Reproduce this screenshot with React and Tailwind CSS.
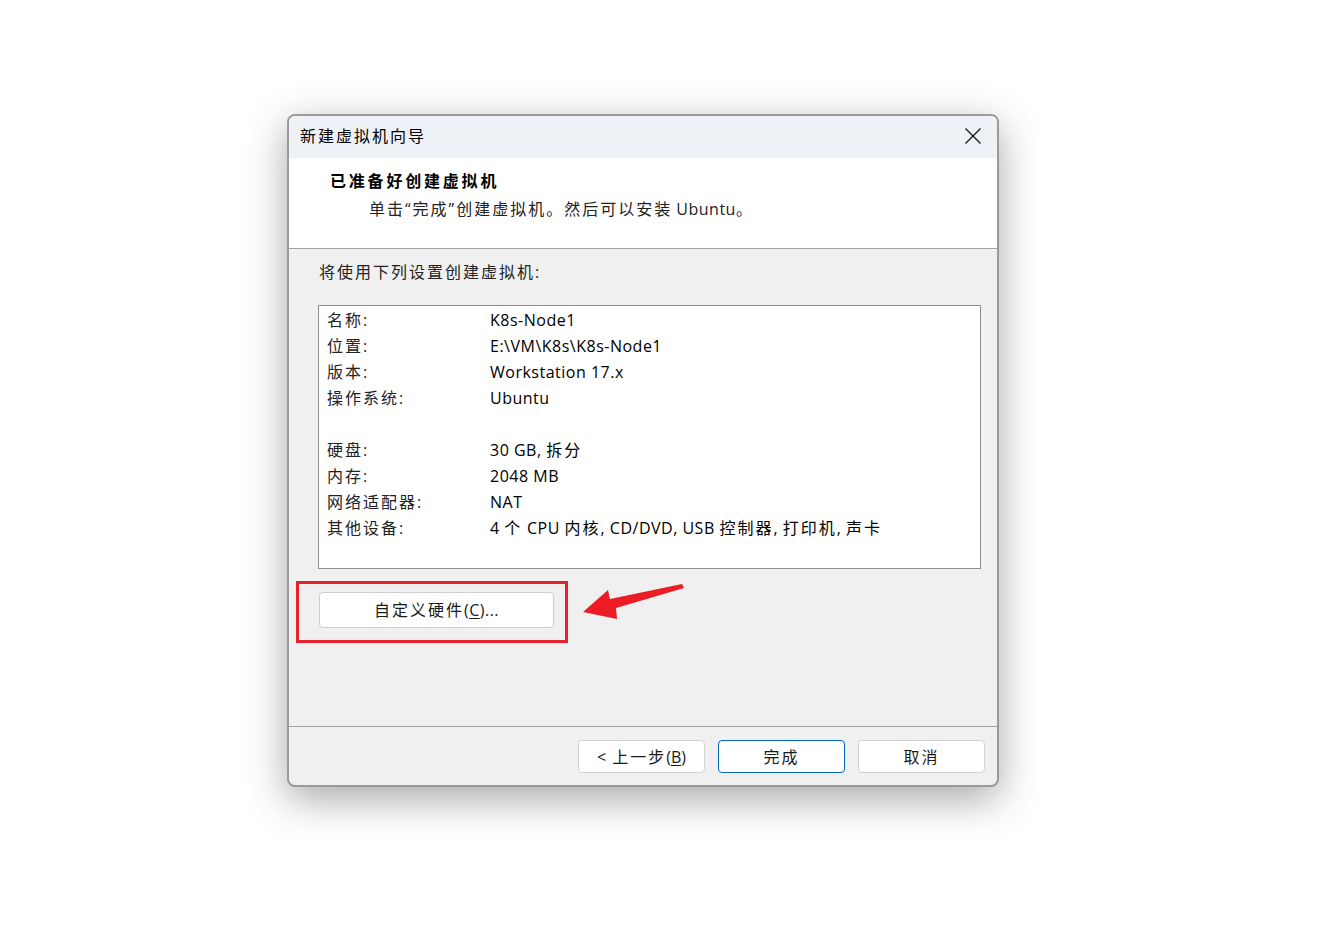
import React from 'react';

// CJK text in the original is spaced wider than its glyphs
function C({ children, className = '' }) {
  return <span className={`tracking-[2px] ${className}`}>{children}</span>;
}

const rows = [
  ['名称:', 'K8s-Node1'],
  ['位置:', 'E:\\VM\\K8s\\K8s-Node1'],
  ['版本:', 'Workstation 17.x'],
  ['操作系统:', 'Ubuntu'],
  null,
  ['硬盘:', <>30 GB, <C>拆分</C></>],
  ['内存:', '2048 MB'],
  ['网络适配器:', 'NAT'],
  ['其他设备:', <>4 <C>个</C> CPU <C>内核</C>, CD/DVD, USB <C>控制器</C>, <C>打印机</C>, <C>声卡</C></>],
];

function Button({ children, primary }) {
  return (
    <button
      className={`w-[127px] h-[33px] rounded-[4px] bg-white text-[16px] text-[#1a1a1a] flex items-center justify-center ${
        primary ? 'border border-[#0067c0]' : 'border border-[#d3d3d3]'
      }`}
    >
      {children}
    </button>
  );
}

export default function App() {
  return (
    <div className="relative w-[1339px] h-[942px] bg-white font-['Open_Sans','Noto_Sans_CJK_SC',sans-serif] text-black">
      <div className="pl-[287px] pt-[114px]">
        <div className="w-[712px] h-[673px] rounded-[8px] border-2 border-[#9a9a9a] bg-[#f0f0f0] flex flex-col overflow-hidden shadow-[0_12px_40px_rgba(0,0,0,0.35)]">
          {/* title bar */}
          <div className="h-[42px] bg-[#eef2f7] flex items-center justify-between pl-[11px] pr-[16px] shrink-0 pb-[2px]">
            <span className="text-[16px] tracking-[2px]">新建虚拟机向导</span>
            <svg width="18" height="18" viewBox="0 0 18 18" className="mr-[-1px]">
              <path d="M1.5 1.5 L16.5 16.5 M16.5 1.5 L1.5 16.5" stroke="#1a1a1a" strokeWidth="1.4" fill="none" />
            </svg>
          </div>

          {/* header */}
          <div className="h-[91px] bg-white border-b border-[#a0a0a0] shrink-0 pt-[12px]">
            <div className="pl-[41px] text-[16px] font-bold tracking-[2.8px] leading-[22px]">已准备好创建虚拟机</div>
            <div className="pl-[80px] mt-[6px] text-[16px] leading-[22px] text-[#222]">
              <C>单击“完成”创建虚拟机。然后可以安装</C> <span className="tracking-[0.5px]">Ubuntu</span><C>。</C>
            </div>
          </div>

          {/* body */}
          <div className="flex-1 flex flex-col">
            <div className="pl-[30px] pt-[12px] text-[16px] leading-[22px] text-[#222]">
              <C>将使用下列设置创建虚拟机:</C>
            </div>
            <div className="ml-[29px] mt-[22px] w-[663px] h-[264px] bg-white border border-[#8f8f8f] pt-[1px]">
              {rows.map((r, i) =>
                r ? (
                  <div key={i} className="h-[26px] flex items-center text-[16px]">
                    <div className="w-[171px] pl-[8px] text-[#222]">
                      <C>{r[0]}</C>
                    </div>
                    <div className="text-black tracking-[0.5px]">{r[1]}</div>
                  </div>
                ) : (
                  <div key={i} className="h-[26px]" />
                )
              )}
            </div>
            <div className="ml-[7px] mt-[12px] w-[272px] h-[62px] border-[3px] border-[#e8202a] pl-[20px] pt-[8px]">
              <button className="w-[235px] h-[36px] rounded-[4px] bg-white border border-[#cfcfcf] text-[16px] text-[#1a1a1a] flex items-center justify-center tracking-[0.5px]">
                <C>自定义硬件</C>(<span className="underline underline-offset-2">C</span>)...
              </button>
            </div>
          </div>

          {/* footer */}
          <div className="h-[59px] border-t border-[#a0a0a0] shrink-0 flex items-start justify-end gap-[13px] pt-[13px] pr-[12px]">
            <Button>
              &lt; <C className="ml-[6px]">上一步</C>(<span className="underline underline-offset-2">B</span>)
            </Button>
            <Button primary>
              <C>完成</C>
            </Button>
            <Button>
              <C>取消</C>
            </Button>
          </div>
        </div>
      </div>

      {/* annotation arrow */}
      <svg className="absolute left-0 top-0 pointer-events-none" width="1339" height="942">
        <polygon
          points="583,612 608,590 610,599 682,584 684,588 616,608 617,619"
          fill="#ec1c24"
        />
      </svg>
    </div>
  );
}
